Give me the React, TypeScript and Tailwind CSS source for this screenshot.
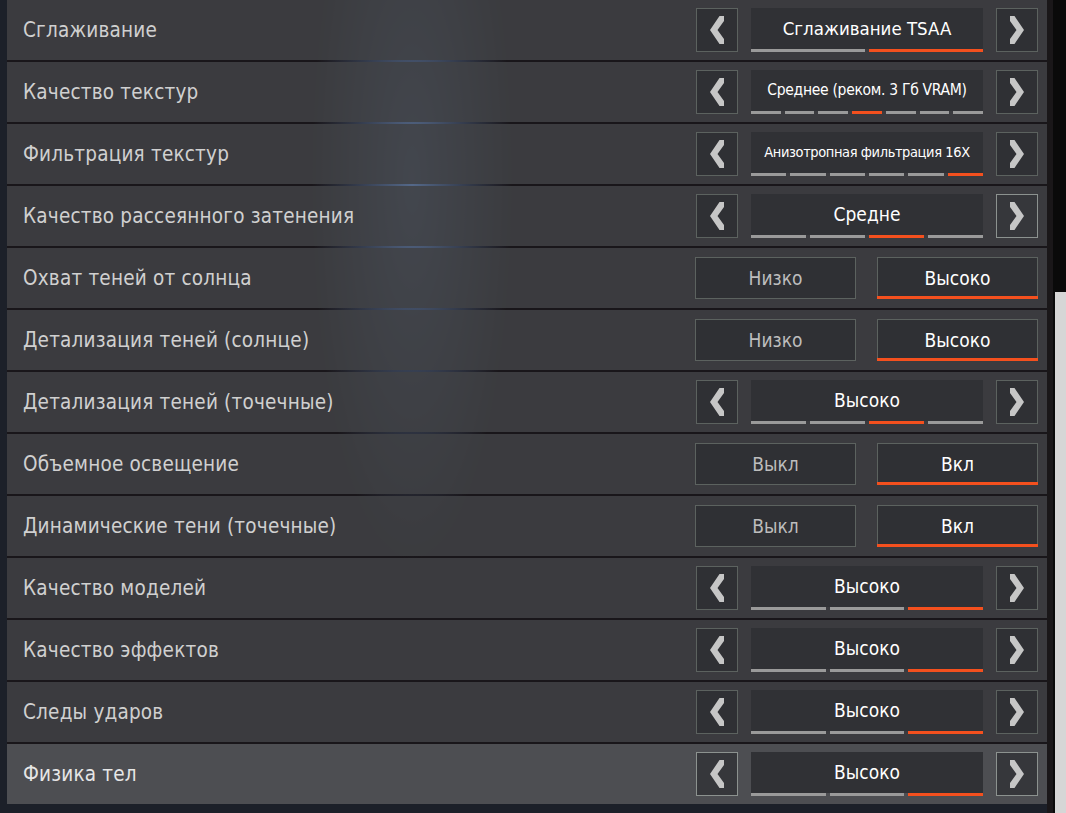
import React from "react";

type Row =
  | { label: string; kind: "sel"; value: string; segs: number; active: number; size?: string; hoverRight?: boolean }
  | { label: string; kind: "tog"; a: string; b: string };

const rows: Row[] = [
  { label: "Сглаживание", kind: "sel", value: "Сглаживание TSAA", segs: 2, active: 1, size: "text-[18.5px]" },
  { label: "Качество текстур", kind: "sel", value: "Среднее (реком. 3 Гб VRAM)", segs: 7, active: 3, size: "text-[15.5px] tracking-[-0.3px]" },
  { label: "Фильтрация текстур", kind: "sel", value: "Анизотропная фильтрация 16X", segs: 6, active: 5, size: "text-[14.5px] tracking-[-0.4px]" },
  { label: "Качество рассеянного затенения", kind: "sel", value: "Средне", segs: 4, active: 2, hoverRight: true },
  { label: "Охват теней от солнца", kind: "tog", a: "Низко", b: "Высоко" },
  { label: "Детализация теней (солнце)", kind: "tog", a: "Низко", b: "Высоко" },
  { label: "Детализация теней (точечные)", kind: "sel", value: "Высоко", segs: 4, active: 2 },
  { label: "Объемное освещение", kind: "tog", a: "Выкл", b: "Вкл" },
  { label: "Динамические тени (точечные)", kind: "tog", a: "Выкл", b: "Вкл" },
  { label: "Качество моделей", kind: "sel", value: "Высоко", segs: 3, active: 2 },
  { label: "Качество эффектов", kind: "sel", value: "Высоко", segs: 3, active: 2 },
  { label: "Следы ударов", kind: "sel", value: "Высоко", segs: 3, active: 2 },
  { label: "Физика тел", kind: "sel", value: "Высоко", segs: 3, active: 2 },
];

function Chevron({ dir }: { dir: "l" | "r" }) {
  return (
    <svg width="14" height="28" viewBox="0 0 14 28" className={dir === "r" ? "scale-x-[-1]" : ""}>
      <path d="M9.5 0 H14 V5 L7.5 14 L14 23 V28 H9.5 L0 14 Z" fill="#c6c6c6" />
    </svg>
  );
}

function ArrowBtn({ dir, light }: { dir: "l" | "r"; light?: boolean }) {
  return (
    <div
      className={
        "w-[42px] h-[44px] flex items-center justify-center border " +
        (light ? "border-[#8c928f] bg-[#36373b]" : "border-[#5c625f] bg-[#2f3034]")
      }
    >
      <Chevron dir={dir} />
    </div>
  );
}

export default function App() {
  return (
    <div
      className="w-[1066px] h-[813px] flex bg-[#1c2029] overflow-hidden"
      style={{ fontFamily: '"DejaVu Sans Condensed", "DejaVu Sans", sans-serif' }}
    >
      <div className="w-[7px] shrink-0" />
      <div className="w-[1040px] shrink-0 flex flex-col gap-[2px] bg-[#19161a] bg-[radial-gradient(ellipse_100px_380px_at_405px_180px,rgba(110,140,185,0.7),transparent)] h-[804px]">
        {rows.map((r, i) => {
          const last = i === rows.length - 1;
          return (
            <div
              key={i}
              className={
                "h-[60px] shrink-0 flex items-center pl-[16px] pr-[9px] " +
                (last ? "bg-[rgba(80,81,85,0.97)]" : "bg-[rgba(64,65,69,0.87)]")
              }
            >
              <div className={"flex-1 text-[20.5px] tracking-[0.2px] " + (last ? "text-[#e6e6e6]" : "text-[#d0d0d0]")}>
                {r.label}
              </div>
              {r.kind === "sel" ? (
                <div className="flex items-center gap-[13px]">
                  <ArrowBtn dir="l" light={last} />
                  <div className="w-[232px] h-[44px] flex flex-col">
                    <div className={"flex-1 bg-[#303135] flex items-center justify-center whitespace-nowrap text-white " + (r.size ?? "text-[19px]")}>
                      {r.value}
                    </div>
                    <div className="h-[3px] flex gap-[4px]">
                      {Array.from({ length: r.segs }).map((_, k) => (
                        <div key={k} className={"flex-1 " + (k === r.active ? "bg-[#f4501e]" : "bg-[#9a9a9a]")} />
                      ))}
                    </div>
                  </div>
                  <ArrowBtn dir="r" light={last || r.hoverRight} />
                </div>
              ) : (
                <div className="flex items-center gap-[21px] ml-[-1px]">
                  <div className="w-[161px] h-[42px] border border-[#5c625f] bg-[#2f3034] flex items-center justify-center text-[19px] text-[#bdbdbd]">
                    {r.a}
                  </div>
                  <div className="w-[161px] h-[42px] border border-[#5c625f] border-b-0 bg-[#2f3034] flex flex-col">
                    <div className="flex-1 flex items-center justify-center text-[19px] text-white pt-[2px]">{r.b}</div>
                    <div className="h-[3px] bg-[#f4501e] mx-[-1px]" />
                  </div>
                </div>
              )}
            </div>
          );
        })}
      </div>
      <div className="w-[6px] shrink-0 bg-[#1a1719]" />
      <div className="w-[2px] shrink-0 bg-[#0a0a0a]" />
      <div className="w-[11px] shrink-0 flex flex-col bg-[#0a0a0a]">
        <div className="h-[292px]" />
        <div className="flex-1 bg-[#d6d6d6]" />
      </div>
    </div>
  );
}
